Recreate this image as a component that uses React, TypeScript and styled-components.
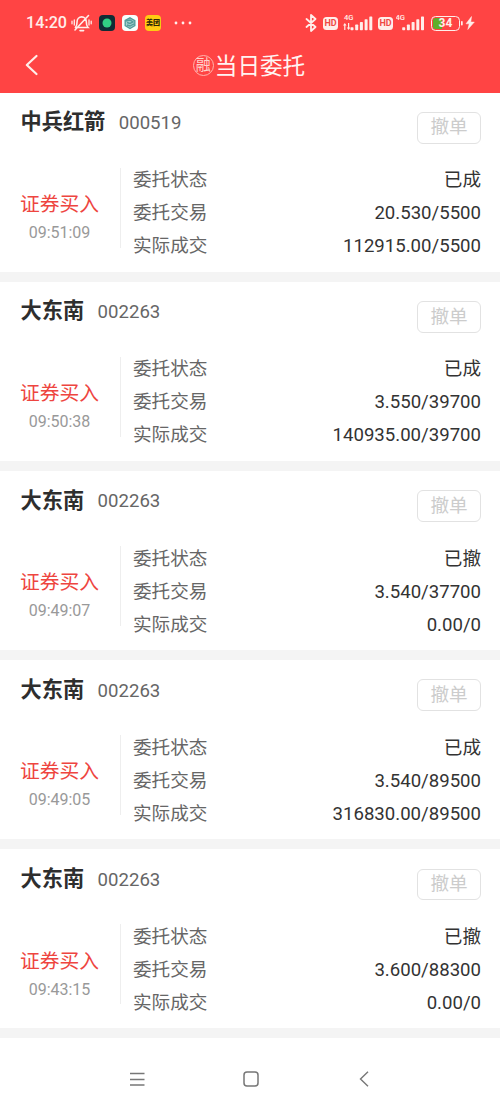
import React from "react";
import styled, { createGlobalStyle } from "styled-components";

const GlobalStyle = createGlobalStyle`
  * { box-sizing: border-box; }
  body {
    margin: 0;
    background: #fff;
    font-family: Roboto, "Noto Sans CJK SC", sans-serif;
    color: #333;
  }
`;

const Screen = styled.div`
  width: 500px;
  height: 1111px;
  display: flex;
  flex-direction: column;
  overflow: hidden;
`;

const Top = styled.header`
  height: 93px;
  flex: none;
  background: #ff4444;
  color: #ffeeea;
`;

const StatusBar = styled.div`
  height: 46px;
  padding: 0 25px 0 26px;
  display: flex;
  justify-content: space-between;
  align-items: center;
`;

const StatusGroup = styled.div`
  display: flex;
  align-items: center;
`;

const Clock = styled.span`
  width: 45px;
  font-size: 16.2px;
  font-weight: 500;
  line-height: 20px;
  white-space: nowrap;
`;

const Glyph = styled.svg<{ $gap?: number }>`
  display: block;
  flex: none;
  margin-left: ${(p) => p.$gap ?? 0}px;
`;

const AppBadge = styled.span<{ $bg: string; $gap: number }>`
  width: 16px;
  height: 16px;
  margin-left: ${(p) => p.$gap}px;
  border-radius: 4px;
  background: ${(p) => p.$bg};
  color: #2e2806;
  display: flex;
  align-items: center;
  justify-content: center;
  font-size: 7px;
  line-height: 16px;
  font-weight: 900;
  white-space: nowrap;
`;

const HdBadge = styled.span<{ $gap: number }>`
  width: 15px;
  height: 13px;
  margin-left: ${(p) => p.$gap}px;
  border-radius: 3.5px;
  background: #ffeeea;
  color: #f04a45;
  font-size: 9px;
  font-weight: 700;
  line-height: 13px;
  text-align: center;
`;

const Battery = styled.span`
  width: 29px;
  height: 15px;
  margin-left: 7px;
  border: 1.5px solid #ffeeea;
  border-radius: 4.5px;
  background: linear-gradient(90deg, #5fae2a 0 36%, #ff4444 36%) content-box;
  padding: 1px;
  font-size: 12px;
  font-weight: 700;
  line-height: 11px;
  text-align: center;
`;

const TitleBar = styled.div`
  height: 47px;
  padding: 0 24px 9px;
  display: grid;
  grid-template-columns: 60px 1fr 60px;
  align-items: center;
`;

const Title = styled.h1`
  margin: 0;
  padding-top: 3px;
  padding-right: 2px;
  display: flex;
  align-items: center;
  justify-content: center;
  font-size: 22.6px;
  font-weight: 400;
  line-height: 35px;
  color: #fff4f2;
`;

const Seal = styled.span`
  width: 21px;
  height: 21px;
  margin: 0 1px 3px 0;
  border: 1px solid #ffb5ae;
  border-radius: 50%;
  color: #ffd2cc;
  font-size: 15px;
  line-height: 18px;
  text-align: center;
`;

const List = styled.main`
  flex: none;
`;

const Card = styled.article`
  height: 189.1px;
  border-bottom: 10.4px solid #f4f4f4;
  background: #fff;
  padding: 0 19px 0 20.5px;
`;

const CardHead = styled.div`
  height: 71.4px;
  display: flex;
  align-items: flex-start;
`;

const StockName = styled.h2`
  margin: 0;
  padding-top: 14.4px;
  font-size: 21.2px;
  line-height: 30px;
  font-weight: 700;
  color: #2e2e2e;
`;

const StockCode = styled.span`
  padding-top: 15.3px;
  margin-left: 13.5px;
  font-size: 18.6px;
  line-height: 30px;
  color: #666;
`;

const CancelButton = styled.button`
  width: 64px;
  height: 31.5px;
  margin: 19.2px 0 0 auto;
  padding: 0 0 1px;
  border: 1px solid #e2e2e2;
  border-radius: 6px;
  background: #fff;
  color: #ccc;
  font: 400 18.6px/26px Roboto, "Noto Sans CJK SC", sans-serif;
`;

const CardBody = styled.div`
  display: flex;
  height: 99px;
`;

const Side = styled.div`
  width: 100px;
  height: 80px;
  margin-top: 3.6px;
  padding: 23.2px 21px 0 0;
  border-right: 1px solid #eee;
  display: flex;
  flex-direction: column;
  align-items: center;
  white-space: nowrap;
`;

const Action = styled.span`
  font-size: 19.8px;
  line-height: 28px;
  color: #ee4540;
`;

const Time = styled.time`
  font-size: 16px;
  line-height: 28px;
  color: #999;
`;

const Details = styled.dl`
  flex: 1;
  margin: 0 0 0 12.5px;
`;

const Row = styled.div`
  height: 33px;
  display: flex;
  justify-content: space-between;
  font-size: 18.6px;
  line-height: 33px;
`;

const Label = styled.dt`
  color: #666;
`;

const Value = styled.dd`
  margin: 0;
  color: #333;
`;

const NavBar = styled.nav`
  height: 72px;
  padding: 10px 127px 0 128px;
  display: flex;
  align-items: center;
  justify-content: space-between;
`;

const orders = [
  { name: "中兵红箭", code: "000519", time: "09:51:09", status: "已成", order: "20.530/5500", deal: "112915.00/5500" },
  { name: "大东南", code: "002263", time: "09:50:38", status: "已成", order: "3.550/39700", deal: "140935.00/39700" },
  { name: "大东南", code: "002263", time: "09:49:07", status: "已撤", order: "3.540/37700", deal: "0.00/0" },
  { name: "大东南", code: "002263", time: "09:49:05", status: "已成", order: "3.540/89500", deal: "316830.00/89500" },
  { name: "大东南", code: "002263", time: "09:43:15", status: "已撤", order: "3.600/88300", deal: "0.00/0" },
];

const MutedBell = () => (
  <Glyph width="21" height="20" viewBox="0 0 21 20" fill="none" stroke="#ffeeea" strokeWidth="1.6" strokeLinecap="round">
    <path d="M5 14.5h12c-1.5-1.5-1.7-3-1.7-6a4.6 4.6 0 0 0-9.2 0c0 3-.2 4.5-1.7 6M9 17.6h3.6M4 17 17.5 2.5" />
    <path d="M3.3 7v5M1 8.2v2.6M18 7v5M20.2 8.2v2.6" strokeWidth="1.3" />
  </Glyph>
);

const Signal = ({ gap, arrows }: { gap: number; arrows?: boolean }) => {
  const x = arrows ? 7.5 : 6.2;
  return (
    <Glyph $gap={gap} width={arrows ? 30 : 28} height="18" viewBox={`0 0 ${arrows ? 30 : 28} 18`} fill="#ffeeea">
      <text x={arrows ? 1 : -0.5} y="6.2" fontSize="7.6" fontFamily="Roboto, sans-serif" fontWeight="500">4G</text>
      {arrows && <path d="M0 11.5 1.8 9l1.8 2.5H2.4V16H1.2v-4.5ZM3.8 13.5h1.2V9h1.2v4.5h1.2L5.6 16Z" />}
      {[3, 5.7, 8.2, 11, 13.8].map((h, i) => (
        <rect key={h} x={x + i * 4.7} y={16.2 - h} width="3" height={h} rx=".7" />
      ))}
    </Glyph>
  );
};

export default function App() {
  return (
    <Screen>
      <GlobalStyle />
      <Top>
        <StatusBar>
          <StatusGroup>
            <Clock>14:20</Clock>
            <MutedBell />
            <AppBadge $bg="#102c35" $gap={7}>
              <Glyph width="16" height="16" viewBox="0 0 16 16">
                <circle cx="8" cy="8" r="4.5" fill="#31cf84" />
              </Glyph>
            </AppBadge>
            <AppBadge $bg="#f7fffd" $gap={7}>
              <Glyph width="16" height="16" viewBox="0 0 16 16" fill="none" stroke="#549c9c" strokeWidth="1.4">
                <path d="m8 2.8 4.8 2.8v5L8 13.5l-4.8-3v-5L8 2.8Z" fill="#a9d2d0" />
                <path d="m3.5 6 4.5-1 3 2-3 1.5-3-1M5 10l3 1 4-2.2" />
              </Glyph>
            </AppBadge>
            <AppBadge $bg="#ffcc12" $gap={7}>美团</AppBadge>
            <Glyph $gap={13} width="18" height="4" viewBox="0 0 18 4" fill="#ffeeea">
              <circle cx="2" cy="2" r="1.4" />
              <circle cx="9" cy="2" r="1.4" />
              <circle cx="16" cy="2" r="1.4" />
            </Glyph>
          </StatusGroup>
          <StatusGroup>
            <Glyph width="12" height="18" viewBox="0 0 12 18" fill="none" stroke="#ffeeea" strokeWidth="1.8" strokeLinejoin="round" strokeLinecap="round">
              <path d="m1.5 5 9 8L6 17V1l4.5 4-9 8" />
            </Glyph>
            <HdBadge $gap={6}>HD</HdBadge>
            <Signal gap={5} arrows />
            <HdBadge $gap={5}>HD</HdBadge>
            <Signal gap={3} />
            <Battery>34</Battery>
            <Glyph $gap={1} width="14" height="14" viewBox="0 0 14 14" fill="#ffeeea">
              <rect x="0" y="5" width="1.7" height="4.5" rx=".8" />
              <path d="M10.5.5 5 7.8h3.2L6.8 13.5l6.5-7.4H9.8Z" stroke="#ffeeea" strokeWidth=".5" />
            </Glyph>
          </StatusGroup>
        </StatusBar>
        <TitleBar>
          <Glyph width="16" height="22" viewBox="0 0 16 22" fill="none" stroke="#ffeeea" strokeWidth="2.2" strokeLinecap="round" strokeLinejoin="round">
            <path d="M12.5 2 2.8 11l9.7 9" />
          </Glyph>
          <Title>
            <Seal>融</Seal>
            当日委托
          </Title>
        </TitleBar>
      </Top>
      <List>
        {orders.map((o) => (
          <Card key={o.time}>
            <CardHead>
              <StockName>{o.name}</StockName>
              <StockCode>{o.code}</StockCode>
              <CancelButton>撤单</CancelButton>
            </CardHead>
            <CardBody>
              <Side>
                <Action>证券买入</Action>
                <Time>{o.time}</Time>
              </Side>
              <Details>
                <Row><Label>委托状态</Label><Value>{o.status}</Value></Row>
                <Row><Label>委托交易</Label><Value>{o.order}</Value></Row>
                <Row><Label>实际成交</Label><Value>{o.deal}</Value></Row>
              </Details>
            </CardBody>
          </Card>
        ))}
      </List>
      <NavBar>
        <Glyph width="18" height="18" viewBox="0 0 18 18" stroke="#777" strokeWidth="1.4">
          <path d="M2 3.5h14.5M2 9.5h14.5M2 15h14.5" />
        </Glyph>
        <Glyph width="18" height="18" viewBox="0 0 18 18" fill="none" stroke="#777" strokeWidth="1.5">
          <rect x="2" y="2" width="14" height="14" rx="3" />
        </Glyph>
        <Glyph width="18" height="18" viewBox="0 0 18 18" fill="none" stroke="#777" strokeWidth="1.4">
          <path d="M13 1.8 5.5 9l7.5 7.2" />
        </Glyph>
      </NavBar>
    </Screen>
  );
}
